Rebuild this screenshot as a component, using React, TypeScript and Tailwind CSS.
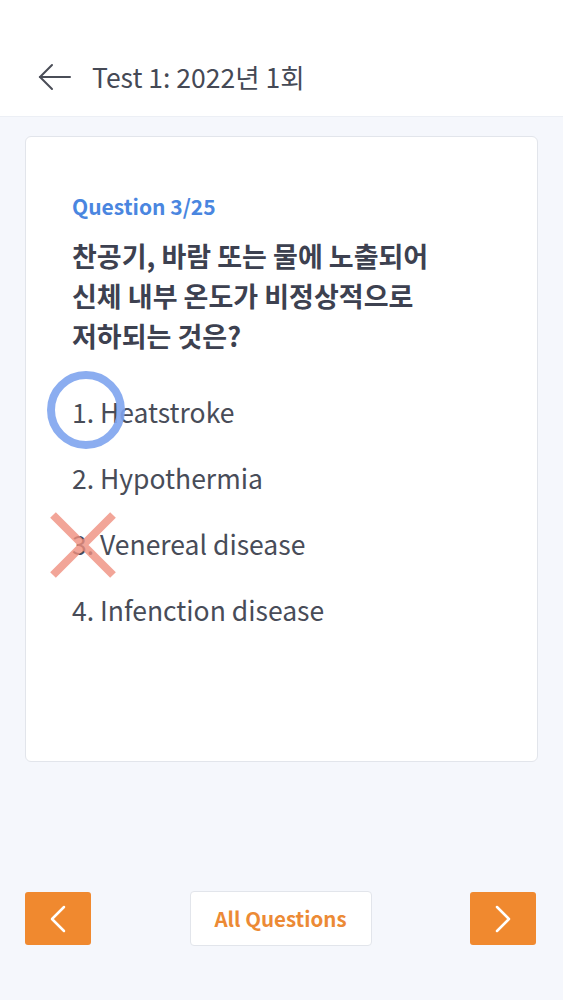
import React from "react";

export default function App() {
  const font = { fontFamily: '"Noto Sans CJK KR", "Noto Sans", sans-serif' };
  const options = ["1. Heatstroke", "2. Hypothermia", "3. Venereal disease", "4. Infenction disease"];
  return (
    <div className="w-[563px] h-[1000px] bg-[#f5f7fc] flex flex-col" style={font}>
      <header className="h-[117px] bg-white border-b border-[#eceff5] flex items-end pb-[25px] pl-[38px]">
        <div className="flex items-center gap-[21px]">
          <svg width="33" height="28" viewBox="0 0 33 28" fill="none" stroke="#4a4d57" strokeWidth="2" strokeLinecap="round">
            <path d="M32 14H2" />
            <path d="M14 2L2 14L14 26" />
          </svg>
          <span className="text-[26.5px] text-[#454955] leading-none">Test 1: 2022년 1회</span>
        </div>
      </header>
      <div className="px-[25px] pt-[19px]">
        <div className="h-[626px] bg-white border border-[#e2e5eb] rounded-[6px] pl-[46px] pt-[54px]">
          <div className="text-[21px] font-bold text-[#4a86e0] leading-[30px]">Question 3/25</div>
          <div className="mt-[15px] text-[27px] font-bold text-[#3d4150] leading-[40px]">
            찬공기, 바람 또는 물에 노출되어<br />신체 내부 온도가 비정상적으로<br />저하되는 것은?
          </div>
          <div className="mt-[23px] flex flex-col">
            {options.map((o, i) => (
              <div key={i} className="relative h-[66px] flex items-center text-[26.5px] text-[#484c58]">
                {o}
                {i === 0 && (
                  <svg className="absolute left-[-26px] top-[-9px]" width="80" height="80" viewBox="0 0 80 80">
                    <circle cx="40" cy="40" r="35" fill="none" stroke="#7ea4ee" strokeOpacity="0.9" strokeWidth="8" />
                  </svg>
                )}
                {i === 2 && (
                  <svg className="absolute left-[-22px] top-[1px]" width="66" height="66" viewBox="0 0 66 66">
                    <path d="M3 3L63 63M63 3L3 63" stroke="#ef8f7e" strokeOpacity="0.8" strokeWidth="8" />
                  </svg>
                )}
              </div>
            ))}
          </div>
        </div>
      </div>
      <div className="mt-[129px] pl-[25px] pr-[27px] flex items-center justify-between">
        <button className="w-[66px] h-[53px] bg-[#f0892f] rounded-[3px] flex items-center justify-center">
          <svg width="16" height="28" viewBox="0 0 16 28" fill="none" stroke="#fff" strokeWidth="2.5" strokeLinecap="round" strokeLinejoin="round">
            <path d="M14 2L2 14L14 26" />
          </svg>
        </button>
        <button className="w-[182px] h-[55px] bg-white border border-[#e2e5eb] rounded-[4px] text-[20.5px] font-bold text-[#ec8a35]">
          All Questions
        </button>
        <button className="w-[66px] h-[53px] bg-[#f0892f] rounded-[3px] flex items-center justify-center">
          <svg width="16" height="28" viewBox="0 0 16 28" fill="none" stroke="#fff" strokeWidth="2.5" strokeLinecap="round" strokeLinejoin="round">
            <path d="M2 2L14 14L2 26" />
          </svg>
        </button>
      </div>
    </div>
  );
}
